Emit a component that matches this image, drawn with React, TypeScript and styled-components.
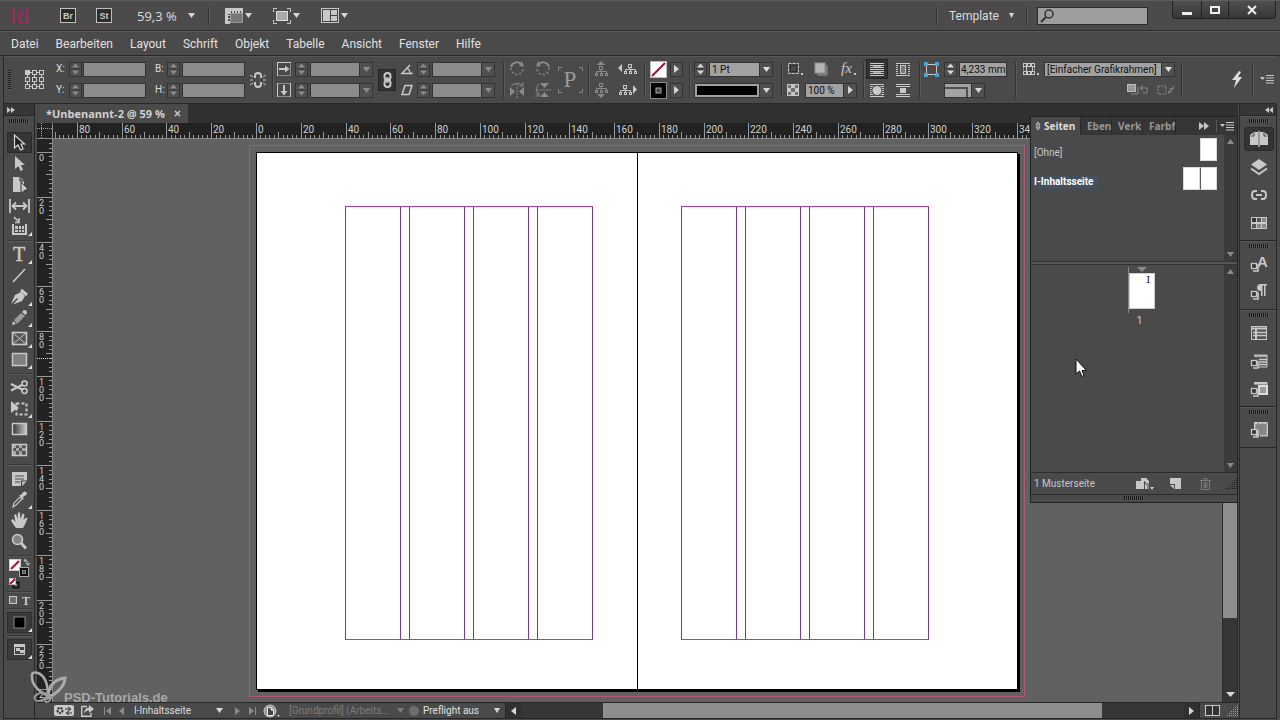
import React from 'react';
import styled, { createGlobalStyle, css } from 'styled-components';

const UI = '"Open Sans", "Noto Sans", sans-serif';
const SMALL = 'Roboto, "Noto Sans", sans-serif';
const BG = '#4a4a4a';
const LINE = '#272727';
const INK = '#c8c8c8';
const DIM = '#8a8a8a';

const Global = createGlobalStyle`
  * { box-sizing: border-box; }
  html, body { margin: 0; padding: 0; background: ${BG}; }
  body { font-family: ${UI}; color: #dcdcdc; overflow: hidden; }
  button, input, select { font: inherit; color: inherit; margin: 0; padding: 0; border: 0; background: none; border-radius: 0; outline: none; }
  select { appearance: none; }
  svg { display: block; flex: none; overflow: visible; }
`;

/* ---------- shell ---------- */

const Shell = styled.div`
  display: flex;
  flex-direction: column;
  height: 100vh;
  background: ${BG};
  border-top: 1px solid #5c5c5c;
`;

const TitleBar = styled.header`
  display: flex;
  align-items: center;
  height: 30px;
  flex: none;
  padding-right: 4px;
  background: #4c4a4b;
  border-bottom: 1px solid #2e2e2e;
`;

const Logo = styled.div`
  width: 22px;
  margin-left: 10px;
  font: 600 21px/22px ${UI};
  color: #8f2f5e;
`;

const AppBadge = styled.button<{ $gap: number }>`
  width: 16px;
  height: 15px;
  margin-left: ${(p) => p.$gap}px;
  border: 1px solid #c0c0c0;
  background: #2c2c2c;
  color: #c8c8c8;
  font: bold 9px/12px "Liberation Sans", sans-serif;
  text-align: center;
`;

const Divider = styled.i<{ $gap?: number; $h?: number }>`
  flex: none;
  width: 2px;
  height: ${(p) => p.$h || 20}px;
  margin-left: ${(p) => p.$gap || 0}px;
  margin-right: -1px;
  border-left: 1px solid #363636;
  border-right: 1px solid #5a5a5a;
`;

const PlainSelectBox = styled.span<{ $w: number; $gap: number; $size: number; $font?: string }>`
  display: grid;
  align-items: center;
  flex: none;
  width: ${(p) => p.$w}px;
  margin-left: ${(p) => p.$gap}px;
  font: ${(p) => p.$size}px/16px ${(p) => p.$font || SMALL};
  > * { grid-area: 1 / 1; }
  > select { width: 100%; }
  > svg { justify-self: end; pointer-events: none; }
`;

const MenuIconButton = styled.button<{ $gap: number }>`
  display: flex;
  align-items: center;
  gap: 2px;
  margin-left: ${(p) => p.$gap}px;
`;

const Fill = styled.div`
  flex: 1;
`;

const SearchBox = styled.label`
  display: flex;
  align-items: center;
  width: 111px;
  height: 18px;
  margin-left: 10px;
  padding-left: 2px;
  background: #9e9e9e;
  border: 1px solid #2c2c2c;
  input { flex: 1; min-width: 0; font-size: 11px; color: #111; }
`;

const WindowButtons = styled.div`
  display: flex;
  align-self: flex-start;
  height: 18px;
  margin-left: 24px;
  border: 1px solid #232323;
  border-top: 0;
  border-radius: 0 0 4px 4px;
  background: linear-gradient(#505050, #363636);
`;

const WindowButton = styled.button<{ $w: number }>`
  display: flex;
  align-items: center;
  justify-content: center;
  width: ${(p) => p.$w}px;
  & + & { border-left: 1px solid #232323; }
`;

const MenuBar = styled.nav`
  display: flex;
  align-items: center;
  gap: 17px;
  flex: none;
  height: 25px;
  padding-left: 11px;
  border-bottom: 1px solid ${LINE};
  border-top: 1px solid #585858;
  button { font: 12px/20px ${SMALL}; color: #e0e0e0; }
`;

/* ---------- control bar ---------- */

const ControlBar = styled.section`
  display: flex;
  align-items: center;
  flex: none;
  height: 48px;
  margin: 0 4px 0 3px;
  padding-bottom: 1px;
  border-left: 1px solid ${LINE};
  border-bottom: 1px solid ${LINE};
  border-top: 1px solid #585858;
  font: 10px/14px ${SMALL};
`;

const Cell = styled.div<{ $gap: number; $w: number }>`
  display: flex;
  justify-content: center;
  flex: none;
  width: ${(p) => p.$w}px;
  margin-left: ${(p) => p.$gap}px;
`;

const Pair = styled.div<{ $gap: number; $w: number }>`
  display: grid;
  grid-template-rows: 14px 14px;
  row-gap: 7px;
  align-items: center;
  flex: none;
  width: ${(p) => p.$w}px;
  margin-left: ${(p) => p.$gap}px;
`;

const Row = styled.div<{ $between?: boolean; $end?: boolean }>`
  display: flex;
  align-items: center;
  gap: 2px;
  ${(p) => p.$between && css`justify-content: space-between;`}
  ${(p) => p.$end && css`justify-content: flex-end; gap: 8px;`}
`;

const VGrip = styled.i`
  width: 3px;
  height: 20px;
  background: repeating-linear-gradient(#1c1c1c 0 1px, #5a5a5a 1px 2px);
`;

const SpinBox = styled.button`
  display: flex;
  flex: none;
  align-items: center;
  justify-content: center;
  width: 13px;
  height: 15px;
  border: 1px solid #333;
  background: #505050;
`;

const Field = styled.input<{ $on?: boolean }>`
  width: 100%;
  min-width: 0;
  height: 15px;
  border: 1px solid #333 !important;
  background: ${(p) => (p.$on ? '#a2a2a2' : '#8b8b8b')} !important;
  color: #111 !important;
  padding-left: 1px !important;
`;

const ComboBox = styled.span<{ $on?: boolean }>`
  display: flex;
  flex: 1;
  min-width: 0;
  height: 15px;
  border: 1px solid #333;
  background: ${(p) => (p.$on ? '#a2a2a2' : '#8b8b8b')};
  color: #111;
  select { flex: 1; width: 0; min-width: 0; padding-left: 2px; line-height: 13px; }
`;

const ComboArrow = styled.i`
  display: flex;
  align-items: center;
  justify-content: center;
  width: 13px;
  background: #505050;
  border-left: 1px solid #333;
`;

const OpacityBox = styled.div`
  display: flex;
  width: 52px;
`;

const StyleBox = styled.div`
  display: flex;
  width: 131px;
`;

const CornerBox = styled(ComboBox)`
  flex: none;
  width: 41px;
  background: #a2a2a2;
`;

const StrokeSample = styled.i`
  flex: 1;
  margin: 2px 2px;
  background: #000;
`;

const CornerSample = styled.i`
  flex: 1;
  margin: 3px 3px 0 0;
  border-top: 2px solid #505050;
  border-right: 2px solid #505050;
`;

const IconButton = styled.button<{ $w?: number; $h?: number; $down?: boolean }>`
  display: flex;
  align-items: center;
  justify-content: center;
  flex: none;
  width: ${(p) => (p.$w ? p.$w + 'px' : 'auto')};
  height: ${(p) => (p.$h ? p.$h + 'px' : 'auto')};
  ${(p) => p.$down && css`background: #333; border: 1px solid #262626;`}
`;

/* ---------- body ---------- */

const Body = styled.div`
  display: flex;
  flex: 1;
  min-height: 0;
  margin: 0 3px 1px 3px;
  border-bottom: 1px solid ${LINE};
  border-left: 1px solid ${LINE};
  border-right: 1px solid ${LINE};
`;

const Toolbox = styled.aside`
  display: flex;
  flex-direction: column;
  align-items: center;
  flex: none;
  width: 31px;
  border-right: 1px solid ${LINE};
`;

const PanelHead = styled.div<{ $end?: boolean }>`
  display: flex;
  align-items: center;
  justify-content: ${(p) => (p.$end ? 'flex-end' : 'flex-start')};
  flex: none;
  align-self: stretch;
  height: 12px;
  padding: 0 3px;
  background: #363636;
  border-bottom: 1px solid ${LINE};
`;

const HGrip = styled.i`
  flex: none;
  width: 20px;
  height: 4px;
  margin: 3px auto 2px;
  background: repeating-linear-gradient(90deg, #161616 0 1px, #5a5a5a 1px 2px);
`;

const ToolList = styled.div`
  display: flex;
  flex-direction: column;
  align-items: center;
  padding-top: 7px;
`;

const ToolButton = styled.button<{ $active?: boolean }>`
  display: flex;
  align-items: center;
  justify-content: center;
  width: 25px;
  height: 21px;
  ${(p) => p.$active && css`background: #353535; border: 1px solid #2a2a2a;`}
`;

const ToolRule = styled.hr<{ $tight?: boolean }>`
  width: 26px;
  height: 2px;
  margin: ${(p) => (p.$tight ? '1px 0' : '3px 0 2px')};
  border: 0;
  background: #393939;
  border-bottom: 1px solid #5a5a5a;
`;

const ModeButton = styled(ToolButton)`
  margin: 1px 0;
  background: #3a3a3a;
  border: 1px solid #2e2e2e;
`;

const DocArea = styled.main`
  position: relative;
  display: flex;
  flex-direction: column;
  flex: 1;
  min-width: 0;
  margin-left: 2px;
  background: #303030;
`;

const TabStrip = styled.div`
  display: flex;
  flex: none;
  height: 19px;
  background: #303030;
`;

const DocTab = styled.div`
  display: flex;
  align-items: center;
  gap: 9px;
  width: 151px;
  padding-left: 9px;
  background: ${BG};
  font: bold 11px/18px ${UI};
  color: #d0d0d0;
  white-space: nowrap;
`;

const View = styled.div`
  display: grid;
  grid-template-columns: 16px 1fr 16px;
  grid-template-rows: 16px 1fr;
  flex: 1;
  min-height: 0;
`;

const RulerStrip = styled.div<{ $wide?: boolean }>`
  overflow: hidden;
  min-height: 0;
  background: #222;
  font-family: ${SMALL};
  ${(p) => p.$wide && css`grid-column: 2 / 4;`}
`;

const Canvas = styled.div`
  overflow: hidden;
  min-width: 0;
  min-height: 0;
  padding: 6px 0 0 196px;
  background: #616161;
`;

const Bleed = styled.div`
  width: 776px;
  padding: 6px;
  border: 1px solid #b45574;
`;

const Spread = styled.div`
  display: flex;
  height: 538px;
  border: 1px solid #000;
  box-shadow: 2px 2px 0 #000;
  background: #fff;
`;

const Page = styled.div<{ $side: 'left' | 'right' }>`
  display: flex;
  flex: 1;
  padding: ${(p) => (p.$side === 'left' ? '53px 44px 49px 88px' : '53px 88px 49px 43px')};
  ${(p) => p.$side === 'left' && css`border-right: 1px solid #000;`}
`;

const MarginBox = styled.div`
  display: flex;
  flex: 1;
  gap: 8px;
  border-top: 1px solid #a83cb4;
  border-bottom: 1px solid #a83cb4;
`;

const Column = styled.i`
  flex: 1;
  border-left: 1px solid #7c34ac;
  border-right: 1px solid #7c34ac;
`;

const VScroll = styled.div`
  display: flex;
  flex-direction: column;
  background: #363636;
  border-left: 1px solid #2a2a2a;
  border-right: 1px solid #2a2a2a;
`;

const Track = styled.i<{ $part: number; $thumb?: boolean }>`
  flex: ${(p) => p.$part};
  background: ${(p) => (p.$thumb ? '#8e8e8e' : '#363636')};
`;

const ScrollArrow = styled.button`
  display: flex;
  align-items: center;
  justify-content: center;
  flex: none;
  width: 15px;
  height: 15px;
`;

const StatusBar = styled.footer`
  display: flex;
  align-items: center;
  flex: none;
  height: 16px;
  padding-left: 17px;
  background: ${BG};
  border-top: 1px solid ${LINE};
  font: 10px/14px ${SMALL};
`;

const StatusCell = styled.span<{ $gap: number; $w: number; $dim?: boolean }>`
  display: flex;
  align-items: center;
  gap: 4px;
  flex: none;
  width: ${(p) => p.$w}px;
  margin-left: ${(p) => p.$gap}px;
  white-space: nowrap;
  color: ${(p) => (p.$dim ? '#7c7c7c' : '#e0e0e0')};
`;

const HScroll = styled.div`
  display: flex;
  align-self: stretch;
  flex: 1;
  margin-left: 5px;
  background: #303030;
  border-left: 1px solid #262626;
  border-right: 1px solid #262626;
`;

/* ---------- pages panel ---------- */

const PagesPanel = styled.section`
  position: absolute;
  top: 12px;
  right: 0;
  display: flex;
  flex-direction: column;
  width: 208px;
  height: 387px;
  background: ${BG};
  border: 1px solid #222;
  font: 10px/14px ${SMALL};
`;

const PanelTabs = styled.div`
  display: flex;
  align-items: stretch;
  flex: none;
  height: 18px;
  background: #363636;
`;

const PanelTab = styled.button<{ $w: number; $active?: boolean }>`
  display: flex;
  align-items: center;
  gap: 3px;
  flex: none;
  width: ${(p) => p.$w}px;
  padding-left: ${(p) => (p.$active ? 4 : 6)}px;
  overflow: hidden;
  white-space: nowrap;
  font: bold 10px/14px ${UI};
  color: ${(p) => (p.$active ? '#dedede' : '#979797')};
  background: ${(p) => (p.$active ? BG : '#363636')};
  border-right: 1px solid #2a2a2a;
`;

const PanelActions = styled.div`
  display: flex;
  align-items: center;
  flex: 1;
  justify-content: flex-end;
  gap: 4px;
  padding-right: 3px;
`;

const PanelSection = styled.div<{ $h?: number }>`
  display: flex;
  ${(p) => (p.$h ? css`flex: none; height: ${p.$h}px;` : css`flex: 1; min-height: 0;`)}
`;

const PanelBody = styled.div`
  flex: 1;
  min-width: 0;
`;

const PanelScroll = styled.div`
  display: flex;
  flex-direction: column;
  justify-content: space-between;
  align-items: center;
  width: 13px;
  padding: 4px 0;
  background: #3b3b3b;
`;

const MasterRow = styled.div`
  display: flex;
  align-items: center;
  justify-content: space-between;
  height: 29px;
  padding: 0 7px 0 2px;
  color: #c8c8c8;
`;

const MasterName = styled.span<{ $active?: boolean }>`
  margin-top: 7px;
  padding: 0 6px 0 1px;
  ${(p) => p.$active && css`background: #44505f; color: #fff; font-weight: bold;`}
`;

const Thumbs = styled.span`
  display: flex;
`;

const Thumb = styled.i`
  width: 17px;
  height: 23px;
  background: #fff;
  border: 1px solid #dadada;
  & + & { border-left-color: #555; }
`;

const SplitBar = styled.div`
  flex: none;
  height: 4px;
  background: #565656;
  border-top: 1px solid #333;
  border-bottom: 1px solid #333;
`;

const PageSlot = styled.div`
  display: flex;
  flex-direction: column;
  align-items: center;
  width: 27px;
  margin-left: 97px;
  padding-top: 2px;
`;

const SpineGuide = styled.div`
  display: flex;
  flex-direction: column;
  align-items: center;
  width: 27px;
  padding-bottom: 4px;
  border-left: 1px solid #888;
`;

const PageThumb = styled.div`
  width: 26px;
  height: 36px;
  padding-right: 4px;
  background: #fff;
  border: 1px solid #ccc;
  color: #000;
  text-align: right;
  font: 9px/12px "DejaVu Serif", serif;
`;

const PageNumber = styled.span`
  margin-top: 1px;
  padding-right: 4px;
  color: #d0d0d0;
`;

const PanelFooter = styled.div`
  display: flex;
  align-items: center;
  flex: none;
  height: 22px;
  padding-left: 3px;
  border-top: 1px solid #2c2c2c;
  color: #c8c8c8;
`;

const FooterButton = styled.button`
  display: flex;
  justify-content: center;
  width: 18px;
  margin-right: 12px;
`;

const PanelEdge = styled.div`
  display: flex;
  flex: none;
  height: 8px;
  border-top: 1px solid #2c2c2c;
  i { margin: 1px auto 0; }
`;

const Pointer = styled.span`
  position: absolute;
  right: 151px;
  top: 254px;
`;

const Watermark = styled.div`
  position: absolute;
  left: -8px;
  bottom: 14px;
  display: flex;
  align-items: flex-end;
  color: #a8a8a8;
  pointer-events: none;
  span { margin-left: -5px; font: bold 13px/13px "Liberation Sans", sans-serif; }
`;

/* ---------- dock ---------- */

const Dock = styled.aside`
  display: flex;
  flex-direction: column;
  flex: none;
  width: 37px;
  margin-left: 1px;
  border-left: 1px solid ${LINE};
`;

const DockGroup = styled.div`
  display: flex;
  flex-direction: column;
  align-items: center;
  padding: 0 0 3px 2px;
  border-bottom: 1px solid ${LINE};
  border-top: 1px solid #555;
  i { margin-top: 2px; }
`;

const DockButton = styled.button<{ $active?: boolean }>`
  display: flex;
  align-items: center;
  justify-content: center;
  width: 30px;
  height: 28px;
  ${(p) => p.$active && css`
    height: 24px;
    margin: 2px 0;
    background: #343434;
    border: 1px solid #2a2a2a;
    border-radius: 3px;
  `}
`;

/* ---------- glyphs ---------- */

type IcoProps = { w: number; h: number; c?: string; children: React.ReactNode };
const Ico = ({ w, h, c = INK, children }: IcoProps) => (
  <svg width={w} height={h} viewBox={`0 0 ${w} ${h}`} fill={c} aria-hidden="true">{children}</svg>
);
const Down = ({ c = '#d8d8d8', s = 7 }: { c?: string; s?: number }) => (
  <Ico w={s} h={5} c={c}><path d={`M0 0H${s}L${s / 2} 5Z`} /></Ico>
);
const Up = ({ c = DIM }: { c?: string }) => <Ico w={7} h={5} c={c}><path d="M0 5H7L3.5 0Z" /></Ico>;
const Right = ({ c = '#d8d8d8', h = 8 }: { c?: string; h?: number }) => (
  <Ico w={5} h={h} c={c}><path d={`M0 0V${h}L5 ${h / 2}Z`} /></Ico>
);
const Left = ({ c = '#d8d8d8' }: { c?: string }) => <Ico w={5} h={8} c={c}><path d="M5 0V8L0 4Z" /></Ico>;
const Flyout = () => <path d="M25 16V20H21Z" fill="#e0e0e0" />;

const Spin = ({ on, label }: { on?: boolean; label: string }) => (
  <SpinBox aria-label={label}>
    <Ico w={9} h={12} c={on ? '#d8d8d8' : DIM}><path d="M1 4.5L4.5 .5L8 4.5ZM1 7.5L4.5 11.5L8 7.5Z" /><rect y="5.5" width="9" height="1" fill="#333" /></Ico>
  </SpinBox>
);

const Combo = ({ on, label, value = '', right }: { on?: boolean; label: string; value?: string; right?: boolean }) => (
  <ComboBox $on={on}>
    <select aria-label={label} defaultValue={value}><option>{value}</option></select>
    <ComboArrow>{right ? <Right /> : <Down c={on ? '#e0e0e0' : DIM} />}</ComboArrow>
  </ComboBox>
);

const RefPoint = () => (
  <Ico w={20} h={20}>
    <path d="M5 2.5H15M5 16.5H15M2.5 5V15M16.5 5V15M9.5 5V7M9.5 12V14" stroke={INK} />
    {[0, 7, 14].map((y) => [0, 7, 14].map((x) => (
      <rect key={x + '-' + y} x={x + 0.5} y={y + 0.5} width="4" height="4" fill={x + y ? BG : INK} stroke={INK} />
    )))}
  </Ico>
);

const BrokenLink = () => (
  <Ico w={16} h={18}>
    <g fill="none" stroke={INK} strokeWidth="2"><path d="M5 7V5Q5 2 8 2T11 5V7M5 11V13Q5 16 8 16T11 13V11" /></g>
    <path d="M0 4L3 6M0 9H3M0 14L3 12M16 4L13 6M16 9H13M16 14L13 12" stroke={INK} />
  </Ico>
);

const Chain = () => (
  <Ico w={9} h={16}>
    <g fill="none" stroke={INK} strokeWidth="2"><rect x="1.5" y="1" width="6" height="7" rx="3" /><rect x="1.5" y="8" width="6" height="7" rx="3" /></g>
    <path d="M4.5 5V11" stroke={INK} strokeWidth="2" />
  </Ico>
);

const ScaleX = () => (
  <Ico w={14} h={14}><rect x=".5" y=".5" width="13" height="13" fill="none" stroke={INK} strokeDasharray="1 1" /><path d="M0 .5H14M.5 0V14" stroke={INK} fill="none" /><path d="M2 6H8V3.5L12.5 7L8 10.5V8H2Z" /></Ico>
);
const ScaleY = () => (
  <Ico w={14} h={14}><rect x=".5" y=".5" width="13" height="13" fill="none" stroke={INK} strokeDasharray="1 1" /><path d="M.5 0V14M13.5 0V14" stroke={INK} /><path d="M6 2V8H3.5L7 12.5L10.5 8H8V2Z" /></Ico>
);
const Angle = () => <Ico w={12} h={11} c="none"><path d="M12 9.5H1L9 1M6 4Q9 6 9 9.5" stroke={INK} strokeWidth="1.5" /></Ico>;
const Shear = () => <Ico w={12} h={12} c="none"><path d="M4 1.5H11L8 10.5H1Z" stroke={INK} strokeWidth="1.5" /></Ico>;

const Rotate = ({ flip }: { flip?: boolean }) => (
  <Ico w={16} h={16} c={DIM}>
    <g transform={flip ? 'matrix(-1 0 0 1 16 0)' : undefined}>
      <path d="M12 3A6 6 0 0 0 2 6" fill="none" stroke={DIM} strokeWidth="2" />
      <path d="M2 7A6 6 0 1 0 14 8" fill="none" stroke={DIM} strokeWidth="1.5" strokeDasharray="2 2" />
      <path d="M10 5L15 5.5L13 0Z" />
    </g>
  </Ico>
);
const FlipIcon = ({ vertical }: { vertical?: boolean }) => (
  <Ico w={16} h={16} c={DIM}>
    <g transform={vertical ? 'matrix(0 1 1 0 0 0)' : undefined}>
      <path d="M1 5V14L6 9.5ZM15 5V14L10 9.5Z" />
      <path d="M8 2V16" stroke={DIM} strokeDasharray="2 1" />
      <path d="M2 4Q8 -1 13 3M10 4H14V0" fill="none" stroke={DIM} />
    </g>
  </Ico>
);
const PreviewP = () => (
  <Ico w={25} h={26} c="none">
    <path d="M.5 4V.5H4M21 .5H24.5V4M24.5 22V25.5H21M4 25.5H.5V22" stroke={DIM} />
    <text x="12" y="20" textAnchor="middle" fontFamily="Liberation Serif" fontSize="23" fill="#9a9a9a">P</text>
  </Ico>
);
const Tree = ({ c = INK }: { c?: string }) => (
  <g stroke={c} fill="none"><rect x="4.5" y=".5" width="3" height="3" /><path d="M6 4V6M1.5 8V5.5H11.5V8M6.5 6V8" /><rect x=".5" y="7.5" width="2" height="2" /><rect x="5.5" y="7.5" width="2" height="2" /><rect x="10.5" y="7.5" width="2" height="2" /></g>
);
const Hier = ({ dir }: { dir: 'up' | 'down' | 'left' | 'right' }) => {
  if (dir === 'up') return <Ico w={15} h={16} c={DIM}><path d="M3 4L7 0L11 4Z" /><g transform="translate(1 5)"><Tree c={DIM} /></g></Ico>;
  if (dir === 'down') return <Ico w={15} h={16} c={DIM}><path d="M3 12L7 16L11 12Z" /><g transform="translate(1 1)"><Tree c={DIM} /></g></Ico>;
  if (dir === 'left') return <Ico w={20} h={12}><path d="M4 1V9L0 5Z" /><g transform="translate(6 1)"><Tree /></g></Ico>;
  return <Ico w={20} h={12}><path d="M15 1V10L19 5.5Z" /><g transform="translate(1 1)"><Tree /></g></Ico>;
};

const NoFill = () => <Ico w={17} h={17} c="#fff"><rect x=".5" y=".5" width="16" height="16" stroke="#bbb" /><path d="M2 15L15 2" stroke="#a0122e" strokeWidth="2" /></Ico>;
const BlackStroke = () => <Ico w={17} h={17} c="#000"><rect x=".5" y=".5" width="16" height="16" stroke="#8a8a8a" /><rect x="6" y="6" width="5" height="5" fill="#444" stroke="#aaa" /></Ico>;
const FrameFit = () => <Ico w={16} h={14} c="none"><rect x="1.5" y="1.5" width="10" height="10" stroke={INK} strokeDasharray="3 1" /><rect x="3.5" y="3.5" width="6" height="6" stroke="#2c2c2c" /><path d="M14 11H16V13H14Z" fill={INK} /></Ico>;
const Shadow = () => <Ico w={14} h={14}><rect x="3" y="3" width="11" height="11" rx="2" fill="#777" /><rect x="1" y="1" width="10" height="10" stroke="#8e8e8e" fill="#b4b4b4" /></Ico>;
const Fx = () => <Ico w={18} h={15}><text x="2" y="11" fontFamily="Liberation Serif" fontStyle="italic" fontSize="15">fx</text><rect x="15" y="11" width="2" height="2" /></Ico>;
const Checker = () => (
  <Ico w={12} h={12}>
    <rect width="12" height="12" />
    <path d="M1 1H4V4H1ZM8 1H11V4H8ZM4 4H8V8H4ZM1 8H4V11H1ZM8 8H11V11H8Z" fill="#707070" />
  </Ico>
);
const Wrap = ({ kind }: { kind: number }) => (
  <Ico w={14} h={13}>
    {[0, 2, 4, 6, 8, 10, 12].map((y) => <rect key={y} y={y} width="14" height="1" />)}
    {kind === 0 && <path d="M3 2H11V4H3ZM3 8H11V10H3Z" opacity=".7" />}
    {kind === 1 && <><rect x="2" y="2" width="10" height="9" fill={BG} /><rect x="4.5" y="2.5" width="5" height="8" fill="#777" stroke={INK} /></>}
    {kind === 2 && <><circle cx="7" cy="6.5" r="5.5" fill={BG} /><circle cx="7" cy="6.5" r="4.5" /></>}
    {kind === 3 && <><rect y="3" width="14" height="7" fill={BG} /><rect x="4" y="4" width="6" height="5" /></>}
  </Ico>
);
const Corner = () => (
  <Ico w={15} h={15} c="none">
    <rect x="2.5" y="2.5" width="10" height="10" stroke={INK} />
    <path d="M0 0H4V4H0ZM11 0H15V4H11ZM0 11H4V15H0ZM11 11H15V15H11Z" fill="#4ba3d8" />
  </Ico>
);
const StyleFrame = () => (
  <Ico w={16} h={13} c="none">
    <rect x="3.5" y="3.5" width="6" height="5" stroke={INK} />
    {[0, 4, 8].map((x) => <React.Fragment key={x}><rect x={x + 0.5} y=".5" width="3" height="3" stroke={INK} /><rect x={x + 0.5} y="8.5" width="3" height="3" stroke={INK} /></React.Fragment>)}
    <path d="M.5 4V8M11.5 4V8" stroke={INK} strokeDasharray="1 1" />
    <rect x="14" y="10" width="2" height="2" fill={INK} />
  </Ico>
);
const ClearA = () => <Ico w={22} h={12} c={DIM}><rect x=".5" y=".5" width="8" height="7" stroke="#bbb" fill="#999" /><path d="M4 10H11V3M14 4H20V9H16M16 1L13 4L16 7" fill="none" stroke={DIM} /></Ico>;
const ClearB = () => <Ico w={18} h={12} c="none"><rect x="1" y="2" width="8" height="8" stroke={DIM} strokeDasharray="2 1" /><path d="M11 8H15M12 5H17M17 2L11 10" stroke={DIM} /></Ico>;
const Bolt = () => <Ico w={12} h={18} c="#dedede"><path d="M8 0L1 9H5L3 17L11 6H7L10 1Z" /></Ico>;
const PanelMenu = () => <Ico w={14} h={9}><path d="M0 2H5L2.5 5ZM6 0H14V1H6ZM6 2.5H14V3.5H6ZM6 5H14V6H6ZM6 7.5H14V8.5H6Z" /></Ico>;

const DoubleArrow = ({ left }: { left?: boolean }) => (
  <Ico w={8} h={6}>{left ? <path d="M4 0V6L0 3ZM8 0V6L4 3Z" /> : <path d="M0 0V6L4 3ZM4 0V6L8 3Z" />}</Ico>
);

const resizeDots = [[10, 0], [8, 2], [10, 2], [6, 4], [8, 4], [10, 4], [4, 6], [6, 6], [8, 6], [10, 6], [2, 8], [4, 8], [6, 8], [8, 8], [10, 8], [0, 10], [2, 10], [4, 10], [6, 10], [8, 10], [10, 10]];
const ResizeGrip = ({ c }: { c: string }) => (
  <Ico w={11} h={11} c={c}>{resizeDots.map(([x, y]) => <rect key={x + '.' + y} x={x} y={y} width="1" height="1" />)}</Ico>
);

/* ---------- toolbox glyphs, on a 25 x 21 field ---------- */

const toolArt: Record<string, React.ReactNode> = {
  Auswahl: <path d="M7.5 3V16L11 13L13.5 18L16 17L14 12H17.5Z" fill="#222" stroke="#d8d8d8" strokeWidth="1.2" />,
  Direktauswahl: <path d="M8 3V16L11.5 13L13.5 18L16 17L14 12H18Z" />,
  Seite: <><path d="M6 3H13L17 7V18H6Z" /><path d="M13 3V7H17" fill="#888" stroke="#333" /><path d="M14 8V19L16.5 17L21 15Z" stroke="#3a3a3a" /></>,
  Luecke: <path d="M3 4V18M22 4V18M6 11H19M9 7.5L5.5 11L9 14.5M16 7.5L19.5 11L16 14.5" fill="none" stroke={INK} strokeWidth="1.8" />,
  Inhaltsaufnahme: <><path d="M6 8V18H19V8" fill="none" stroke={INK} strokeWidth="2" /><path d="M8 10H11V13H8ZM12 10H14V13H12ZM15 10H17V13H15ZM8 14H11V16H8ZM12 14H14V16H12ZM15 14H17V16H15Z" /><path d="M7 1L12 6M12 2V6.5H8" fill="none" stroke={INK} strokeWidth="1.5" /><Flyout /></>,
  Text: <><text x="12" y="17" textAnchor="middle" fontFamily="Liberation Serif" fontSize="20" stroke={INK} strokeWidth=".5">T</text><Flyout /></>,
  Linie: <path d="M6 17L18 4" stroke={INK} strokeWidth="1.6" />,
  Zeichenstift: <><path d="M4 18L8 9L14 6L18 10L15 15L6 18.5L11 13L10 12Z" /><path d="M14 4L20 9" stroke={INK} strokeWidth="3" /><Flyout /></>,
  Buntstift: <><path d="M5 18L6 14L9 17Z" /><path d="M7 13L14 6L18 9L10 17Z" fill="#9a9a9a" /><path d="M15 5L17 3Q20 3 20 6L18.5 8Z" /><Flyout /></>,
  Rechteckrahmen: <><rect x="5.5" y="4.5" width="14" height="12" fill="#555" stroke={INK} strokeWidth="1.6" /><path d="M6 5L19 16M19 5L6 16" stroke={INK} /><Flyout /></>,
  Rechteck: <><rect x="5.5" y="4.5" width="14" height="12" fill="#808080" stroke={INK} strokeWidth="1.5" /><Flyout /></>,
  Schere: <><path d="M4 7L16 13M4 13.5L16 7.5" stroke={INK} strokeWidth="2" /><g fill="none" stroke={INK} strokeWidth="1.6"><circle cx="17.5" cy="6.5" r="2.5" /><circle cx="17.5" cy="14" r="2.5" /></g></>,
  Transformieren: <><path d="M4 3V15L8 12L12 10Z" /><rect x="9.5" y="5.5" width="10" height="11" fill="none" stroke={INK} strokeWidth="2" strokeDasharray="3 2" /><Flyout /></>,
  Verlauf: <><defs><linearGradient id="vg"><stop offset="0" stopColor="#333" /><stop offset="1" stopColor="#ccc" /></linearGradient></defs><rect x="5.5" y="4.5" width="14" height="11" fill="url(#vg)" stroke={INK} strokeWidth="1.5" /></>,
  'Weiche Verlaufskante': <><rect x="5.5" y="4.5" width="14" height="11" fill="#555" stroke={INK} strokeWidth="1.5" /><path d="M6 5H9V8H6ZM12 5H15V8H12ZM9 8H12V11H9ZM15 8H19V11H15ZM6 11H9V15H6ZM12 11H15V15H12Z" opacity=".7" /></>,
  Notiz: <><path d="M5 4H20V13L15 18H5Z" /><path d="M8 8H17M8 11H17M8 14H13M14.5 18V13H20" fill="none" stroke="#444" strokeWidth="1.2" /></>,
  Pipette: <><path d="M6 18L7 14L13 8L15 10L9 16Z" fill="#444" stroke={INK} strokeWidth="1.2" /><path d="M12 6L17 11L16 8Q22 5 19 3Q17 1 14 6Z" /><Flyout /></>,
  Hand: <path d="M9 18Q5 13 4 10L6 9L8.5 12L7 5L9 4L10.5 9L11 2.5H13L13.5 9L15.5 3.5L17.5 4.5L16.5 10L19 7.5L20.5 8.5Q18 15 16 18Z" />,
  Zoom: <><circle cx="10.5" cy="8.5" r="5" fill="#858585" stroke={INK} strokeWidth="1.6" /><path d="M14 12L19 17.5" stroke={INK} strokeWidth="3" /></>,
};

const toolGroups = [
  ['Auswahl', 'Direktauswahl', 'Seite', 'Luecke', 'Inhaltsaufnahme'],
  ['Text', 'Linie', 'Zeichenstift', 'Buntstift', 'Rechteckrahmen', 'Rechteck'],
  ['Schere', 'Transformieren', 'Verlauf', 'Weiche Verlaufskante'],
  ['Notiz', 'Pipette', 'Hand', 'Zoom'],
];

const ColorProxy = () => (
  <Ico w={25} h={31}>
    <rect x="2.5" y=".5" width="11" height="11" fill="#fff" stroke="#ccc" />
    <path d="M4 10L12 2" stroke="#a0122e" strokeWidth="2" />
    <rect x="12.5" y="8.5" width="9" height="9" fill="#505050" stroke="#aaa" /><rect x="14" y="10" width="6" height="6" fill="#4a4a4a" stroke="#111" strokeWidth="2" /><rect x="15.5" y="11.5" width="3" height="3" fill="none" stroke="#888" />
    <path d="M17 1.5Q21 1 21 5M19 4L21 6.5L23 4M19 0L17 1.5L19 3.5" fill="none" stroke={INK} />
    <rect x="6.5" y="23.5" width="5" height="5" fill="#777" stroke="#111" strokeWidth="2" />
    <rect x="2.5" y="19.5" width="6" height="6" fill="#fff" stroke="#bbb" /><path d="M3 25L8 20" stroke="#a0122e" strokeWidth="2" />
  </Ico>
);
const FormatRow = () => (
  <Ico w={25} h={13}>
    <rect x="2.5" y="2.5" width="7" height="7" fill="#707070" stroke={INK} />
    <text x="19" y="11" textAnchor="middle" fontFamily="Liberation Serif" fontWeight="bold" fontSize="12">T</text>
  </Ico>
);

/* ---------- dock glyphs ---------- */

const Linked = () => <><path d="M8 9V16H3" fill="none" stroke={INK} strokeWidth="1.6" /><rect x="1.5" y="8.5" width="5" height="5" fill="#333" stroke={INK} strokeWidth="1.3" /></>;
const dockArt: Record<string, React.ReactNode> = {
  Seiten: <><path d="M0 5L4 2H8V15H0ZM10 2H14L18 5V15H10Z" /><path d="M9 1V17" stroke="#fff" /><path d="M4 2.5V6H1M14 2.5V6H17" fill="none" stroke="#444" /></>,
  Ebenen: <><path d="M9 1L17 6.5L9 12L1 6.5Z" /><path d="M1 10.5L9 16L17 10.5" fill="none" stroke={INK} strokeWidth="2" /></>,
  Verknuepfungen: <><path d="M7 5H5Q2 5 2 9T5 13H7M11 5H13Q16 5 16 9T13 13H11" fill="none" stroke={INK} strokeWidth="2" /><path d="M6 9H12" stroke={INK} strokeWidth="2" /></>,
  Farbfelder: <><rect x="1" y="3" width="16" height="12" /><path d="M2 4H6V8H2Z" fill="#333" /><path d="M7 4H11V8H7ZM2 10H6V14H2Z" fill="#555" /><path d="M12 4H16V8H12ZM7 10H11V14H7ZM12 10H16V14H12Z" fill="#8a8a8a" /></>,
  Zeichenformate: <><text x="7" y="12" fontFamily="Liberation Sans" fontWeight="bold" fontSize="15">A</text><Linked /></>,
  Absatzformate: <><path d="M16 1H11Q7 1 7 4.5T11 8V13H12.5V2.5H14V13H15.5V2.5H17V1Z" /><Linked /></>,
  Tabelle: <><rect x="1.5" y="2.5" width="15" height="13" fill="#555" stroke={INK} /><path d="M2 4.5H16M6 5V15" stroke={INK} strokeWidth="2" /><path d="M7 8.5H16M7 11.5H16M3 8.5H5M3 11.5H5" stroke={INK} strokeWidth="1.5" /></>,
  Tabellenformate: <><path d="M4 3H17V15H8" fill="#555" stroke={INK} /><path d="M4 4H17M9 7.5H17M9 10H17M9 12.5H17" stroke={INK} strokeWidth="1.5" /><Linked /></>,
  Zellenformate: <><path d="M4 2.5H17V14H8" fill="#555" stroke={INK} /><path d="M4 3.5H17" stroke={INK} strokeWidth="2" /><rect x="9" y="6" width="8" height="8" fill="#999" stroke="#ddd" strokeWidth="2" /><Linked /></>,
  Objektformate: <><rect x="5" y="2.5" width="12" height="12" fill="#858585" stroke={INK} strokeDasharray="3 1" /><path d="M4 1.5H17.5V15H10M4.5 1V8" fill="none" stroke={INK} /><Linked /></>,
};
const dockGroups = [
  ['Seiten', 'Ebenen', 'Verknuepfungen', 'Farbfelder'],
  ['Zeichenformate', 'Absatzformate'],
  ['Tabelle', 'Tabellenformate', 'Zellenformate'],
  ['Objektformate'],
];

/* ---------- rulers ---------- */

const UNIT = 2.2385; // screen pixels per millimetre at this zoom
const TICK = '#9a9a9a';
const range = (from: number, to: number) => Array.from({ length: to - from }, (_, i) => from + i);

const HorizontalRuler = () => {
  const origin = 203;
  const steps = range(-45, 300);
  return (
    <svg width="1560" height="16" shapeRendering="crispEdges">
      {steps.map((n) => {
        const x = Math.round(origin + n * 2 * UNIT);
        const y = n % 10 === 0 ? 0 : n % 5 === 0 ? 9 : 12;
        return <rect key={n} x={x} y={y} width="1" height={15 - y} fill={TICK} />;
      })}
      <rect y="15" width="1560" height="1" fill="#8a8a8a" />
      {steps.filter((n) => n % 10 === 0).map((n) => (
        <text key={n} x={Math.round(origin + n * 2 * UNIT) + 2} y="10" fontSize="10" fill="#d0d0d0">{Math.abs(n * 2)}</text>
      ))}
    </svg>
  );
};

const VerticalRuler = () => {
  const origin = 13;
  const steps = range(-2, 180);
  return (
    <svg width="16" height="820" shapeRendering="crispEdges">
      {steps.map((n) => {
        const y = Math.round(origin + n * 2 * UNIT);
        const x = n % 10 === 0 ? 0 : n % 5 === 0 ? 9 : 12;
        return <rect key={n} x={x} y={y} width={15 - x} height="1" fill={TICK} />;
      })}
      <rect x="15" width="1" height="820" fill="#8a8a8a" />
      <path d="M0 219.5H15" stroke="#e0e0e0" strokeDasharray="1 1" />
      {steps.filter((n) => n % 10 === 0 && n >= 0).map((n) =>
        String(n * 2).split('').map((d, i) => (
          <text key={n + '-' + i} x="2" y={Math.round(origin + n * 2 * UNIT) + 9 + i * 8} fontSize="9" fill="#d0d0d0">{d}</text>
        )),
      )}
    </svg>
  );
};

/* ---------- composed parts ---------- */

const TopBar = () => (
  <TitleBar>
    <Logo>Id</Logo>
    <AppBadge $gap={28}>Br</AppBadge>
    <AppBadge $gap={20}>St</AppBadge>
    <PlainSelectBox $w={58} $gap={25} $size={13} $font={UI}>
      <select aria-label="Zoomstufe"><option>59,3 %</option></select>
      <Down />
    </PlainSelectBox>
    <Divider $gap={13} />
    <MenuIconButton $gap={16} aria-label="Anzeigeoptionen">
      <Ico w={18} h={16}><path d="M0 0H18V5H16V3H15V5H13V3H12V5H10V3H9V5H7V3H6V6H3V7H5V8H3V10H5V11H3V13H5V16H0Z" /><rect x="5.5" y="5.5" width="12" height="9" fill="#777" stroke="#999" /></Ico>
      <Down />
    </MenuIconButton>
    <MenuIconButton $gap={21} aria-label="Bildschirmmodus">
      <Ico w={18} h={16}><path d="M.5 4V.5H4M14 .5H17.5V4M17.5 12V15.5H14M4 15.5H.5V12" fill="none" stroke={INK} /><rect x="3.5" y="3.5" width="11" height="9" fill="#a8a8a8" stroke="#ddd" /></Ico>
      <Down />
    </MenuIconButton>
    <MenuIconButton $gap={21} aria-label="Dokumente anordnen">
      <Ico w={18} h={15}><rect x=".5" y=".5" width="17" height="14" fill="#444" stroke={INK} /><path d="M2 2H9V13H2ZM10 2H16V7H10ZM10 8H16V13H10Z" /></Ico>
      <Down />
    </MenuIconButton>
    <Fill />
    <Divider />
    <PlainSelectBox $w={65} $gap={12} $size={12}>
      <select aria-label="Arbeitsbereich"><option>Template</option></select>
      <Down s={5} />
    </PlainSelectBox>
    <Divider $gap={12} />
    <SearchBox>
      <Ico w={14} h={14} c="none"><circle cx="9" cy="5" r="4" stroke="#333" strokeWidth="1.5" /><path d="M6 8L1 13" stroke="#333" strokeWidth="2" /></Ico>
      <input aria-label="Suche" />
    </SearchBox>
    <WindowButtons>
      <WindowButton $w={28} aria-label="Minimieren"><Ico w={12} h={12} c="#eee"><rect x="1" y="8" width="10" height="3" /></Ico></WindowButton>
      <WindowButton $w={27} aria-label="Maximieren"><Ico w={12} h={12} c="none"><rect x="2" y="3" width="8" height="6" stroke="#eee" strokeWidth="2" /></Ico></WindowButton>
      <WindowButton $w={47} aria-label="Beenden"><Ico w={12} h={12} c="none"><path d="M2 2L10 10M10 2L2 10" stroke="#eee" strokeWidth="2" /></Ico></WindowButton>
    </WindowButtons>
  </TitleBar>
);

const menus = ['Datei', 'Bearbeiten', 'Layout', 'Schrift', 'Objekt', 'Tabelle', 'Ansicht', 'Fenster', 'Hilfe'];

const Controls = () => (
  <ControlBar>
    <Cell $gap={4} $w={3}><VGrip /></Cell>
    <Cell $gap={14} $w={20}><RefPoint /></Cell>
    <Pair $gap={11} $w={12}><label htmlFor="x">X:</label><label htmlFor="y">Y:</label></Pair>
    <Pair $gap={1} $w={13}><Spin label="X ändern" /><Spin label="Y ändern" /></Pair>
    <Pair $gap={1} $w={63}><Field id="x" /><Field id="y" /></Pair>
    <Pair $gap={9} $w={12}><label htmlFor="b">B:</label><label htmlFor="h">H:</label></Pair>
    <Pair $gap={0} $w={13}><Spin label="B ändern" /><Spin label="H ändern" /></Pair>
    <Pair $gap={2} $w={63}><Field id="b" /><Field id="h" /></Pair>
    <Cell $gap={5} $w={16}><IconButton aria-label="Proportionen"><BrokenLink /></IconButton></Cell>
    <Divider $gap={6} $h={36} />
    <Pair $gap={4} $w={14}><ScaleX /><ScaleY /></Pair>
    <Pair $gap={4} $w={13}><Spin label="X-Skalierung ändern" /><Spin label="Y-Skalierung ändern" /></Pair>
    <Pair $gap={2} $w={63}><Combo label="X-Skalierung" /><Combo label="Y-Skalierung" /></Pair>
    <Cell $gap={5} $w={18}><IconButton $w={18} $h={22} $down aria-label="Skalierung verketten"><Chain /></IconButton></Cell>
    <Pair $gap={5} $w={13}><Angle /><Shear /></Pair>
    <Pair $gap={3} $w={13}><Spin label="Drehwinkel ändern" /><Spin label="Scherwinkel ändern" /></Pair>
    <Pair $gap={2} $w={63}><Combo label="Drehwinkel" /><Combo label="Scherwinkel" /></Pair>
    <Divider $gap={8} $h={36} />
    <Pair $gap={5} $w={16}><IconButton aria-label="Im Uhrzeigersinn drehen"><Rotate /></IconButton><IconButton aria-label="Horizontal spiegeln"><FlipIcon /></IconButton></Pair>
    <Pair $gap={10} $w={16}><IconButton aria-label="Gegen den Uhrzeigersinn drehen"><Rotate flip /></IconButton><IconButton aria-label="Vertikal spiegeln"><FlipIcon vertical /></IconButton></Pair>
    <Cell $gap={7} $w={25}><PreviewP /></Cell>
    <Divider $gap={5} $h={36} />
    <Pair $gap={5} $w={15}><Hier dir="up" /><Hier dir="down" /></Pair>
    <Pair $gap={9} $w={20}><Hier dir="left" /><Hier dir="right" /></Pair>
    <Divider $gap={6} $h={36} />
    <Pair $gap={5} $w={17}><IconButton aria-label="Fläche"><NoFill /></IconButton><IconButton aria-label="Kontur"><BlackStroke /></IconButton></Pair>
    <Pair $gap={3} $w={12}><SpinBox aria-label="Flächenfarbe"><Right /></SpinBox><SpinBox aria-label="Konturfarbe"><Right /></SpinBox></Pair>
    <Divider $gap={7} $h={36} />
    <Pair $gap={4} $w={79}>
      <Row><Spin on label="Konturstärke ändern" /><Combo on label="Konturstärke" value="1 Pt" /></Row>
      <Row><ComboBox $on><StrokeSample /><ComboArrow><Down /></ComboArrow></ComboBox></Row>
    </Pair>
    <Divider $gap={8} $h={36} />
    <Pair $gap={5} $w={70}>
      <Row $between><FrameFit /><Shadow /><Fx /></Row>
      <Row $between><Checker /><OpacityBox><Combo on right label="Deckkraft" value="100 %" /></OpacityBox></Row>
    </Pair>
    <Divider $gap={6} $h={36} />
    <Pair $gap={2} $w={22}><IconButton $w={22} $h={20} $down aria-label="Kein Textumfluss"><Wrap kind={0} /></IconButton><IconButton aria-label="Konturumfluss"><Wrap kind={2} /></IconButton></Pair>
    <Pair $gap={7} $w={16}><IconButton aria-label="Begrenzungsrahmen umfließen"><Wrap kind={1} /></IconButton><IconButton aria-label="Objekt überspringen"><Wrap kind={3} /></IconButton></Pair>
    <Divider $gap={8} $h={36} />
    <Pair $gap={4} $w={15}><Corner /></Pair>
    <Pair $gap={5} $w={63}>
      <Row><Spin on label="Eckengröße ändern" /><Field $on aria-label="Eckengröße" defaultValue="4,233 mm" /></Row>
      <Row><CornerBox><CornerSample /><ComboArrow><Down /></ComboArrow></CornerBox></Row>
    </Pair>
    <Divider $gap={8} $h={36} />
    <Pair $gap={7} $w={152}>
      <Row $between><StyleFrame /><StyleBox><Combo on label="Objektformat" value="[Einfacher Grafikrahmen]" /></StyleBox></Row>
      <Row $end><ClearA /><ClearB /></Row>
    </Pair>
    <Divider $gap={6} $h={36} />
    <Fill />
    <IconButton aria-label="Schnell anwenden"><Bolt /></IconButton>
    <Divider $gap={9} $h={36} />
    <Cell $gap={4} $w={19}><IconButton aria-label="Bedienfeldmenü"><PanelMenu /></IconButton></Cell>
  </ControlBar>
);

const Tools = () => (
  <Toolbox>
    <PanelHead><DoubleArrow /></PanelHead>
    <HGrip />
    <ToolList>
      {toolGroups.map((group, g) => (
        <React.Fragment key={g}>
          {group.map((name) => (
            <ToolButton key={name} aria-label={name} $active={name === 'Auswahl'}>
              <Ico w={25} h={21}>{toolArt[name]}</Ico>
            </ToolButton>
          ))}
          <ToolRule />
        </React.Fragment>
      ))}
      <ColorProxy />
      <ToolRule $tight />
      <FormatRow />
      <ToolRule $tight />
      <ModeButton aria-label="Farbe anwenden"><Ico w={25} h={21}><rect x="7" y="5" width="11" height="11" fill="#000" stroke="#888" /><Flyout /></Ico></ModeButton>
      <ToolRule $tight />
      <ModeButton aria-label="Bildschirmmodus"><Ico w={25} h={21}><rect x="7.5" y="5.5" width="10" height="10" fill="#444" stroke={INK} /><path d="M7 7H18" stroke={INK} strokeWidth="2" /><path d="M9 9H13V12H9ZM13 11H17V14H13Z" /><Flyout /></Ico></ModeButton>
    </ToolList>
  </Toolbox>
);

const PageMargins = () => (
  <MarginBox>{[0, 1, 2, 3].map((i) => <Column key={i} />)}</MarginBox>
);

const Pages = () => (
  <PagesPanel>
    <PanelTabs>
      <PanelTab $w={50} $active><Ico w={6} h={10} c="none"><path d="M1 4L3 1L5 4ZM1 6L3 9L5 6Z" stroke={INK} /></Ico>Seiten</PanelTab>
      <PanelTab $w={31}>Ebene</PanelTab>
      <PanelTab $w={31}>Verkn</PanelTab>
      <PanelTab $w={33}>Farbf</PanelTab>
      <PanelActions>
        <Ico w={10} h={8}><path d="M0 0V8L5 4ZM5 0V8L10 4Z" /></Ico>
        <Divider $gap={2} $h={12} />
        <PanelMenu />
      </PanelActions>
    </PanelTabs>
    <PanelSection $h={126}>
      <PanelBody>
        <MasterRow><MasterName>[Ohne]</MasterName><Thumbs><Thumb /></Thumbs></MasterRow>
        <MasterRow><MasterName $active>I-Inhaltsseite</MasterName><Thumbs><Thumb /><Thumb /></Thumbs></MasterRow>
      </PanelBody>
      <PanelScroll><Up /><Down c={DIM} /></PanelScroll>
    </PanelSection>
    <SplitBar />
    <PanelSection>
      <PanelBody>
        <PageSlot>
          <SpineGuide>
            <Ico w={10} h={6} c="#888"><path d="M0 0H10L5 5Z" /></Ico>
            <PageThumb>I</PageThumb>
          </SpineGuide>
          <PageNumber>1</PageNumber>
        </PageSlot>
      </PanelBody>
      <PanelScroll><Up /><Down c={DIM} /></PanelScroll>
    </PanelSection>
    <PanelFooter>
      <span>1 Musterseite</span>
      <Fill />
      <FooterButton aria-label="Seitenformat bearbeiten"><Ico w={18} h={13}><path d="M0 4H8V12H0ZM5 1H10L13 4V12H9V5H5Z" /><path d="M8 4L11 8M12 6V12" stroke="#444" fill="none" /><path d="M14 10H18L16 13Z" /></Ico></FooterButton>
      <FooterButton aria-label="Neue Seite"><Ico w={11} h={11}><path d="M0 0H11V11H5V6H0Z" /><path d="M0 7H4V11Z" /></Ico></FooterButton>
      <FooterButton aria-label="Löschen"><Ico w={11} h={12} c="none"><path d="M0 2.5H11M4 2V.5H7V2M1.5 3V11.5H9.5V3M4 4V10M5.5 4V10M7 4V10" stroke="#7a7a7a" /></Ico></FooterButton>
      <ResizeGrip c="#222" />
    </PanelFooter>
    <PanelEdge><HGrip /></PanelEdge>
  </PagesPanel>
);

const Status = () => (
  <StatusBar>
    <StatusCell $gap={0} $w={20}><Ico w={20} h={11}><rect width="20" height="11" rx="2" /><circle cx="6" cy="5.5" r="2.5" fill="none" stroke="#333" strokeWidth="2" strokeDasharray="2 1" /><path d="M11 4H16M14 2L17 4L14 6M18 8H13M15 6L12 8L15 10" stroke="#333" fill="none" /></Ico></StatusCell>
    <StatusCell $gap={7} $w={13}><Ico w={13} h={12}><path d="M6 1.5H.7V11.3H10V8" fill="none" stroke={INK} strokeWidth="1.4" /><path d="M8 0L13 4L8 8V5.5Q4 5.5 3 9Q3 3 8 2.5Z" /></Ico></StatusCell>
    <StatusCell $gap={10} $w={8}><Ico w={8} h={8} c={DIM}><path d="M0 0H1V8H0ZM7 0V8L2 4Z" /></Ico></StatusCell>
    <StatusCell $gap={7} $w={5}><Left c={DIM} /></StatusCell>
    <PlainSelectBox $w={89} $gap={10} $size={10}>
      <select aria-label="Seite"><option>I-Inhaltsseite</option></select>
      <Down />
    </PlainSelectBox>
    <StatusCell $gap={12} $w={5}><Right c={DIM} /></StatusCell>
    <StatusCell $gap={8} $w={8}><Ico w={8} h={8} c={DIM}><path d="M1 0V8L6 4ZM7 0H8V8H7Z" /></Ico></StatusCell>
    <StatusCell $gap={7} $w={17}><Ico w={17} h={14}><circle cx="7" cy="7" r="6" fill="#999" stroke="#ccc" /><path d="M4.5 3.5H8L10.5 6V11.5H4.5ZM8 3V6H11" fill="#444" stroke="#eee" /><path d="M14 11H17L15.5 13Z" /></Ico></StatusCell>
    <StatusCell $gap={9} $w={112} $dim><span>[Grundprofil] (Arbeits...</span><Fill /><Down c="#7c7c7c" /></StatusCell>
    <StatusCell $gap={8} $w={91}><Ico w={10} h={10} c="#6e6e6e"><circle cx="5" cy="5" r="5" /></Ico><span>Preflight aus</span><Fill /><Down s={6} /></StatusCell>
    <HScroll>
      <ScrollArrow aria-label="Nach links"><Left /></ScrollArrow>
      <Track $part={82} /><Track $part={500} $thumb /><Track $part={82} />
      <ScrollArrow aria-label="Nach rechts"><Right /></ScrollArrow>
    </HScroll>
    <StatusCell $gap={5} $w={22}><Ico w={15} h={11} c="#333"><rect x=".5" y=".5" width="14" height="10" stroke={INK} /><path d="M7.5 0V11" stroke={INK} /></Ico></StatusCell>
    <ResizeGrip c="#a0a0a0" />
  </StatusBar>
);

export default function App() {
  return (
    <Shell>
      <Global />
      <TopBar />
      <MenuBar>{menus.map((m) => <button key={m}>{m}</button>)}</MenuBar>
      <Controls />
      <Body>
        <Tools />
        <DocArea>
          <TabStrip>
            <DocTab><span>*Unbenannt-2 @ 59 %</span><IconButton aria-label="Schließen"><Ico w={7} h={7} c="none"><path d="M1 1L6 6M6 1L1 6" stroke="#c8c8c8" strokeWidth="1.5" /></Ico></IconButton></DocTab>
          </TabStrip>
          <View>
            <RulerStrip><svg width="16" height="16"><path d="M4.5 0V16M0 5.5H16" stroke="#aaa" strokeDasharray="1 1" /><path d="M15.5 0V16M0 15.5H16" stroke="#8a8a8a" /></svg></RulerStrip>
            <RulerStrip $wide><HorizontalRuler /></RulerStrip>
            <RulerStrip><VerticalRuler /></RulerStrip>
            <Canvas>
              <Bleed>
                <Spread>
                  <Page $side="left"><PageMargins /></Page>
                  <Page $side="right"><PageMargins /></Page>
                </Spread>
              </Bleed>
            </Canvas>
            <VScroll>
              <ScrollArrow aria-label="Nach oben"><Up c="#d8d8d8" /></ScrollArrow>
              <Track $part={120} /><Track $part={344} $thumb /><Track $part={69} />
              <ScrollArrow aria-label="Nach unten"><Down s={9} /></ScrollArrow>
            </VScroll>
          </View>
          <Status />
          <Pages />
          <Pointer><Ico w={12} h={20} c="#fff"><path d="M1 1V16L4.5 13L7 18.5L9 17.5L7 12.5H11.5Z" stroke="#111" /></Ico></Pointer>
          <Watermark>
            <Ico w={40} h={34} c="none">
              <path d="M19 26Q3 18 3 7Q2 1 9 3Q19 7 19 26Z" stroke="#aaa" strokeWidth="2.5" />
              <path d="M19 27Q20 10 36 8Q36 17 24 25Q20 28 15 29" stroke="#aaa" strokeWidth="3" />
              <path d="M20 25Q12 20 6 26Q4 31 10 31Q16 30 19 25M20 25Q14 30 17 32Q22 32 22 26" stroke="#999" strokeWidth="2" />
            </Ico>
            <span>PSD-Tutorials.de</span>
          </Watermark>
        </DocArea>
        <Dock>
          <PanelHead $end><DoubleArrow left /></PanelHead>
          {dockGroups.map((group, g) => (
            <DockGroup key={g}>
              <HGrip />
              {group.map((name) => (
                <DockButton key={name} aria-label={name} $active={name === 'Seiten'}><Ico w={18} h={18}>{dockArt[name]}</Ico></DockButton>
              ))}
            </DockGroup>
          ))}
        </Dock>
      </Body>
    </Shell>
  );
}
